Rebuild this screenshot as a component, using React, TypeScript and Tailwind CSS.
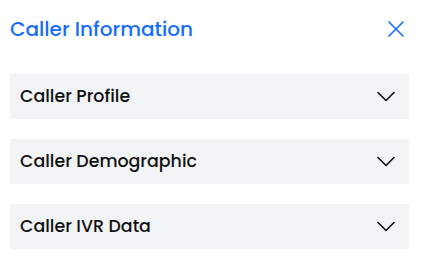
import React from "react";

const Chevron = () => (
  <svg width="18" height="11" viewBox="0 0 18 11" fill="none" className="shrink-0">
    <polyline points="1,1.5 9,9.5 17,1.5" stroke="#111" strokeWidth="1.6" strokeLinecap="round" strokeLinejoin="round" />
  </svg>
);

const Panel = ({ title }: { title: string }) => (
  <div className="flex h-[45px] items-center justify-between bg-[#f2f3f5] pl-[10px] pr-[14px]">
    <span className="text-[17.4px] font-medium text-[#111]">{title}</span>
    <Chevron />
  </div>
);

export default function App() {
  return (
    <div className="min-h-[268px] bg-white pl-[10px] pr-[15px] pt-[10px]" style={{ fontFamily: "Poppins, Inter, 'Noto Sans', sans-serif" }}>
      <div className="flex h-[38px] items-center justify-between">
        <span className="text-[20px] font-medium text-[#166dfc]">Caller Information</span>
        <svg width="16" height="16" viewBox="0 0 16 16" fill="none" className="mr-[5px]">
          <path d="M1 1L15 15M15 1L1 15" stroke="#166dfc" strokeWidth="1.6" strokeLinecap="round" />
        </svg>
      </div>
      <div className="mt-[26px] flex flex-col gap-[20px]">
        <Panel title="Caller Profile" />
        <Panel title="Caller Demographic" />
        <Panel title="Caller IVR Data" />
      </div>
    </div>
  );
}
